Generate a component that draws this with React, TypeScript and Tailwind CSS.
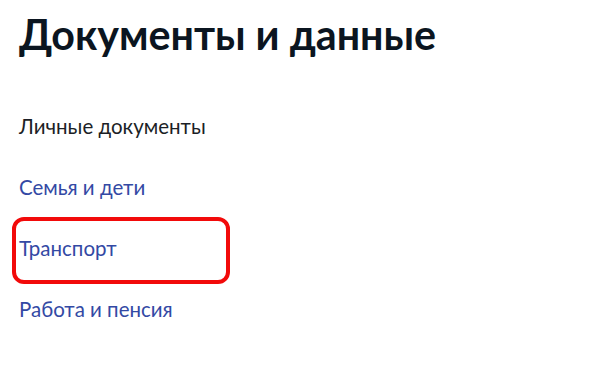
import React from "react";

const items = [
  { label: "Личные документы", active: true },
  { label: "Семья и дети" },
  { label: "Транспорт", highlighted: true },
  { label: "Работа и пенсия" },
];

export default function App() {
  return (
    <div
      className="w-[600px] h-[388px] bg-white overflow-hidden pl-[19px] pt-[10px]"
      style={{ fontFamily: "Lato, 'Noto Sans', sans-serif" }}
    >
      <h1 className="text-[41.2px] leading-[48px] font-bold text-[#0b1520]">
        Документы и данные
      </h1>
      <ul className="mt-[56px] flex flex-col gap-[37px]">
        {items.map((it) => (
          <li key={it.label} className="relative text-[20.5px] leading-[24px]">
            <span className={it.active ? "text-[#1c1f26]" : "text-[#3349a4]"}>{it.label}</span>
            {it.highlighted && (
              <div className="absolute left-[-7px] top-[-19px] w-[218px] h-[67px] rounded-[12px] border-[4px] border-[#f20a0a] pointer-events-none" />
            )}
          </li>
        ))}
      </ul>
    </div>
  );
}
